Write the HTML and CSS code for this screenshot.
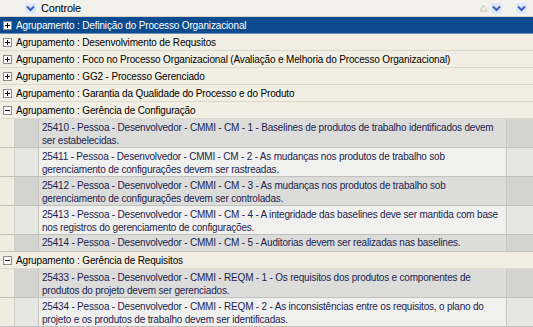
FILE: index.html
```html
<!DOCTYPE html>
<html lang="pt">

<head>
    <meta charset="UTF-8">
    <title>Controle</title>
    <link rel="stylesheet" href="styles.css">
</head>

<body>
    <div class="grid">
        <div class="header">
            <span class="drop">
                <svg width="9" height="7" viewBox="0 0 9 7"><path d="M1 1.5 L4.5 5 L8 1.5" fill="none" stroke="#3a5ec0" stroke-width="2"/></svg>
            </span>
            <span class="caption">Controle</span>
            <span class="sort">
                <svg width="9" height="8" viewBox="0 0 9 8"><path d="M4.5 1 L8 7 L1 7 Z" fill="none" stroke="#c8c4b4" stroke-width="1"/></svg>
            </span>
            <span class="drop">
                <svg width="9" height="7" viewBox="0 0 9 7"><path d="M1 1.5 L4.5 5 L8 1.5" fill="none" stroke="#3a5ec0" stroke-width="2"/></svg>
            </span>
            <span class="drop last">
                <svg width="9" height="7" viewBox="0 0 9 7"><path d="M1 1.5 L4.5 5 L8 1.5" fill="none" stroke="#3a5ec0" stroke-width="2"/></svg>
            </span>
        </div>

        <div class="group selected"><span class="box plus"></span>Agrupamento : Definição do Processo Organizacional</div>
        <div class="group"><span class="box plus"></span>Agrupamento : Desenvolvimento de Requsitos</div>
        <div class="group"><span class="box plus"></span>Agrupamento : Foco no Processo Organizacional (Avaliação e Melhoria do Processo Organizacional)</div>
        <div class="group"><span class="box plus"></span>Agrupamento : GG2 - Processo Gerenciado</div>
        <div class="group"><span class="box plus"></span>Agrupamento : Garantia da Qualidade do Processo e do Produto</div>
        <div class="group"><span class="box minus"></span>Agrupamento : Gerência de Configuração</div>

        <div class="detail dark">
            <div class="indent"></div><div class="lead"></div>
            <div class="text">25410 - Pessoa - Desenvolvedor - CMMI - CM - 1 - Baselines de produtos de trabalho identificados devem ser estabelecidas.</div>
            <div class="tail"></div>
        </div>
        <div class="detail">
            <div class="indent"></div><div class="lead"></div>
            <div class="text">25411 - Pessoa - Desenvolvedor - CMMI - CM - 2 - As mudanças nos produtos de trabalho sob gerenciamento de configurações devem ser rastreadas.</div>
            <div class="tail"></div>
        </div>
        <div class="detail dark">
            <div class="indent"></div><div class="lead"></div>
            <div class="text">25412 - Pessoa - Desenvolvedor - CMMI - CM - 3 - As mudanças nos produtos de trabalho sob gerenciamento de configurações devem ser controladas.</div>
            <div class="tail"></div>
        </div>
        <div class="detail">
            <div class="indent"></div><div class="lead"></div>
            <div class="text">25413 - Pessoa - Desenvolvedor - CMMI - CM - 4 - A integridade das baselines deve ser mantida com base nos registros do gerenciamento de configurações.</div>
            <div class="tail"></div>
        </div>
        <div class="detail dark single">
            <div class="indent"></div><div class="lead"></div>
            <div class="text">25414 - Pessoa - Desenvolvedor - CMMI - CM - 5 - Auditorias devem ser realizadas nas baselines.</div>
            <div class="tail"></div>
        </div>

        <div class="group"><span class="box minus"></span>Agrupamento : Gerência de Requisitos</div>

        <div class="detail dark">
            <div class="indent"></div><div class="lead"></div>
            <div class="text">25433 - Pessoa - Desenvolvedor - CMMI - REQM - 1 - Os requisitos dos produtos e componentes de produtos do projeto devem ser gerenciados.</div>
            <div class="tail"></div>
        </div>
        <div class="detail">
            <div class="indent"></div><div class="lead"></div>
            <div class="text">25434 - Pessoa - Desenvolvedor - CMMI - REQM - 2 - As inconsistências entre os requisitos, o plano do projeto e os produtos de trabalho devem ser identificadas.</div>
            <div class="tail"></div>
        </div>
    </div>
</body>

</html>
```

FILE: styles.css
```css
* {
    margin: 0;
    padding: 0;
    box-sizing: border-box;
}

body {
    background-color: #efede0;
    font-family: "Liberation Sans", Arial, sans-serif;
    font-size: 10px;
    width: 533px;
    height: 327px;
    overflow: hidden;
}

.grid {
    width: 533px;
}

.header {
    display: flex;
    align-items: center;
    height: 17px;
    background-color: #f2f1ea;
    border-bottom: 1px solid #d6d3c4;
    padding-left: 24px;
    font-size: 11px;
    letter-spacing: -0.2px;
}

.header .drop {
    display: flex;
    align-items: center;
    justify-content: center;
    width: 13px;
    height: 13px;
    background-color: #dfe6f4;
    border: 1px solid #eef2fa;
}

.header .caption {
    margin-left: 4px;
    flex: 1;
    color: #000;
}

.header .sort {
    display: flex;
    align-items: center;
    margin-right: 2px;
}

.header .drop.last {
    margin-left: 12px;
    margin-right: 5px;
}

.group {
    display: flex;
    align-items: center;
    height: 17px;
    padding-left: 3px;
    color: #000;
    letter-spacing: -0.15px;
    background-color: #f1efe3;
    border-bottom: 1px solid #dcd9ca;
    white-space: nowrap;
}

.group.selected {
    background-color: #0c4c8e;
    color: #fff;
    border-bottom: 1px solid #6f8fb8;
}

.box {
    position: relative;
    width: 9px;
    height: 9px;
    margin-right: 4px;
    border: 1px solid #8c8c8c;
    background-color: #fff;
}

.box::before,
.box::after {
    content: "";
    position: absolute;
    background-color: #000;
}

.box::before {
    left: 1px;
    top: 3px;
    width: 5px;
    height: 1px;
}

.box.plus::after {
    left: 3px;
    top: 1px;
    width: 1px;
    height: 5px;
}

.detail {
    display: flex;
    height: 29px;
    background-color: #f0f0ee;
    border-bottom: 1px solid #c2c2bd;
}

.detail.single {
    height: 17px;
}

.detail .indent {
    width: 14px;
    background-color: #efede0;
}

.detail .lead {
    width: 25px;
    background-color: #e6e6e3;
    border-left: 1px solid #d0d0cc;
    border-right: 1px solid #c6c6c2;
}

.detail.dark .lead {
    background-color: #d3d3d0;
}

.detail.dark {
    background-color: #dcdcda;
}

.detail .text {
    flex: 1;
    padding: 2px 3px 0 3px;
    line-height: 13px;
    letter-spacing: -0.2px;
    color: #22244e;
    border-right: 1px solid #c6c6c2;
}

.detail.single .text {
    padding-top: 1px;
}

.detail .tail {
    width: 26px;
    background-color: #e6e6e3;
}

.detail.dark .tail {
    background-color: #d3d3d0;
}
```
